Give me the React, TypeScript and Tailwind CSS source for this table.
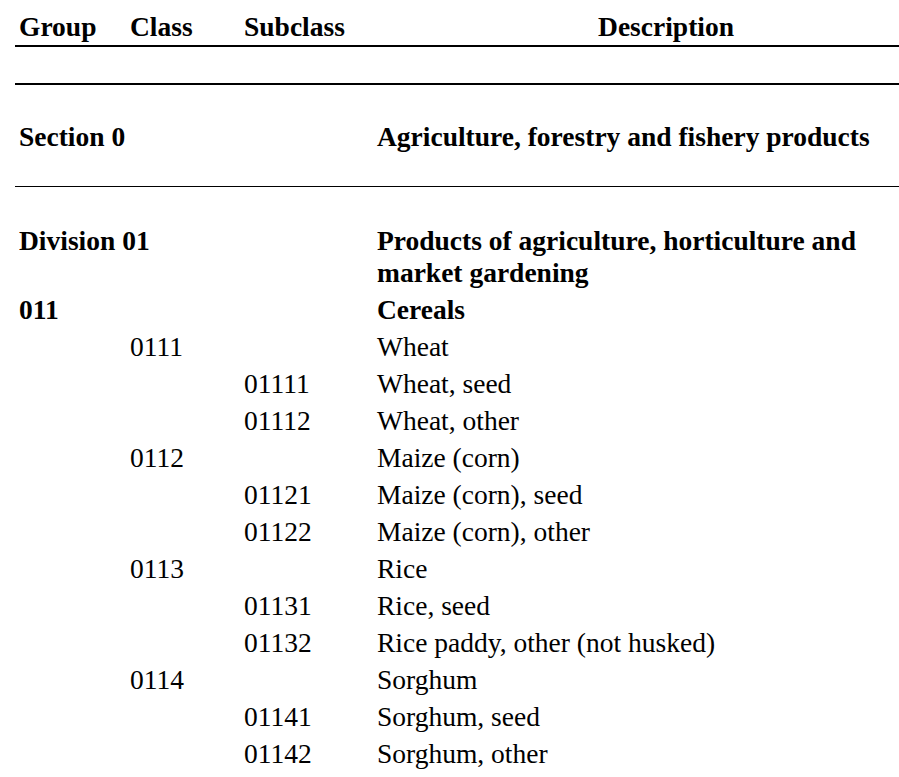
import React from 'react';

interface Row {
  group?: string;
  cls?: string;
  sub?: string;
  desc: string;
  bold?: boolean;
}

const rows: Row[] = [
  { group: 'Division 01', desc: 'Products of agriculture, horticulture and market gardening', bold: true },
  { group: '011', desc: 'Cereals', bold: true },
  { cls: '0111', desc: 'Wheat' },
  { sub: '01111', desc: 'Wheat, seed' },
  { sub: '01112', desc: 'Wheat, other' },
  { cls: '0112', desc: 'Maize (corn)' },
  { sub: '01121', desc: 'Maize (corn), seed' },
  { sub: '01122', desc: 'Maize (corn), other' },
  { cls: '0113', desc: 'Rice' },
  { sub: '01131', desc: 'Rice, seed' },
  { sub: '01132', desc: 'Rice paddy, other (not husked)' },
  { cls: '0114', desc: 'Sorghum' },
  { sub: '01141', desc: 'Sorghum, seed' },
  { sub: '01142', desc: 'Sorghum, other' },
];

const cols = 'grid grid-cols-[111px_114px_133px_1fr]';

const App: React.FC = () => {
  return (
    <div className="min-h-screen bg-white text-black font-[Liberation_Serif,serif] text-[27.5px] leading-[32px] pl-[15px]">
      {/* header */}
      <div className={`${cols} pl-[4px] pt-[11px] h-[47px] border-b-2 border-black font-bold`}>
        <div>Group</div>
        <div>Class</div>
        <div>Subclass</div>
        <div className="text-center pl-[56px]">Description</div>
      </div>
      <div className="h-[38px] border-b-2 border-black" />

      {/* section */}
      <div className={`${cols} pl-[4px] pt-[36px] pb-[33px] border-b border-black font-bold`}>
        <div className="col-span-3">Section 0</div>
        <div className="whitespace-nowrap">Agriculture, forestry and fishery products</div>
      </div>

      <div className="pl-[4px] pt-[38px] flex flex-col gap-[5px]">
        {rows.map((r, i) => (
          <div key={i} className={`${cols} ${r.bold ? 'font-bold' : ''}`}>
            <div className="whitespace-nowrap">{r.group}</div>
            <div>{r.cls}</div>
            <div>{r.sub}</div>
            <div className="pr-[14px]">{r.desc}</div>
          </div>
        ))}
      </div>
    </div>
  );
};

export default App;
